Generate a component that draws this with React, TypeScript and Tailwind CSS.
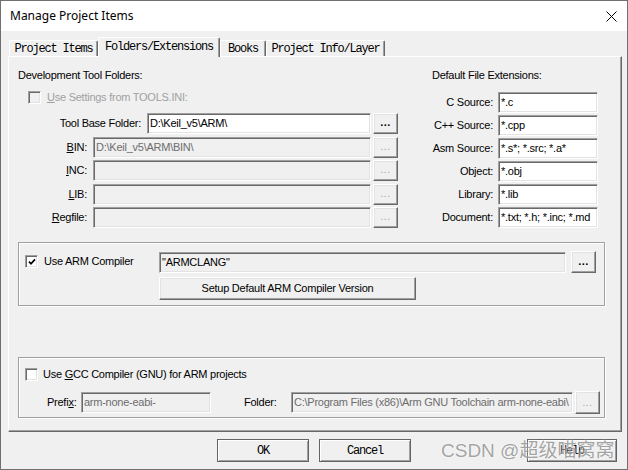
import React from 'react';

const sunken =
  "border border-t-[#a0a0a0] border-l-[#a0a0a0] border-b-white border-r-white shadow-[inset_1px_1px_0_#696969,inset_-1px_-1px_0_#e3e3e3]";
const raised =
  "border border-t-white border-l-white border-b-[#696969] border-r-[#696969] shadow-[inset_-1px_-1px_0_#a0a0a0,inset_1px_1px_0_#e3e3e3] bg-[#f0f0f0]";
const etched = "border border-[#a0a0a0] shadow-[1px_1px_0_#ffffff,inset_1px_1px_0_#ffffff]";
const mono = "font-['Liberation_Mono',monospace] text-[12px] tracking-[-1.2px]";

function Field({
  w,
  text,
  disabled,
  gray,
}: {
  w: string;
  text?: string;
  disabled?: boolean;
  gray?: boolean;
}) {
  return (
    <div
      className={`${w} h-[21px] shrink-0 ${sunken} ${
        disabled || gray ? 'bg-[#f0f0f0]' : 'bg-white'
      } ${disabled ? 'text-[#6d6d6d]' : 'text-black'} pl-[2px] flex items-center whitespace-nowrap overflow-hidden leading-none`}
    >
      {text}
    </div>
  );
}

function Dots({ disabled, h }: { disabled?: boolean; h?: string }) {
  return (
    <div
      className={`${raised} w-[25px] ${h ?? 'h-[21px]'} shrink-0 flex items-end justify-center pb-[5px] leading-none tracking-[0.5px] ${
        disabled ? 'text-[#a0a0a0] text-[10px]' : 'text-black text-[11px] font-bold'
      }`}
    >
      ...
    </div>
  );
}

function Check({ checked, disabled }: { checked?: boolean; disabled?: boolean }) {
  return (
    <div
      className={`w-[13px] h-[13px] shrink-0 ${sunken} ${
        disabled ? 'bg-[#f0f0f0]' : 'bg-white'
      } flex items-center justify-center`}
    >
      {checked && (
        <svg width="8" height="8" viewBox="0 0 8 8">
          <path d="M1 3.6 L3 5.8 L7 1.4" fill="none" stroke="#000" strokeWidth="1.7" />
        </svg>
      )}
    </div>
  );
}

function Tab({ label, w, selected }: { label: string; w: string; selected?: boolean }) {
  return (
    <div
      className={`${w} ${
        selected ? 'h-[20px] mb-[-1px] relative z-10 pb-[2px]' : 'h-[16px]'
      } shrink-0 border-t border-l border-r border-t-white border-l-white border-r-[#696969] shadow-[inset_-1px_0_0_#a0a0a0] rounded-t-[2px] bg-[#f0f0f0] flex items-center justify-center ${mono} leading-none whitespace-nowrap text-black`}
    >
      {label}
    </div>
  );
}

function DlgButton({ label, w, ml }: { label: string; w: string; ml?: string }) {
  return (
    <div
      className={`${w} ${ml ?? ''} h-[23px] shrink-0 border border-[#646464] shadow-[inset_1px_1px_0_#ffffff,inset_-1px_-1px_0_#a0a0a0] bg-[#f0f0f0] flex items-center justify-center ${mono} leading-none text-black`}
    >
      {label}
    </div>
  );
}

const leftRows: {
  label: React.ReactNode;
  w: string;
  text?: string;
  disabled?: boolean;
}[] = [
  { label: 'Tool Base Folder:', w: 'w-[224px]', text: 'D:\\Keil_v5\\ARM\\' },
  {
    label: (
      <>
        <u>B</u>IN:
      </>
    ),
    w: 'w-[278px]',
    text: 'D:\\Keil_v5\\ARM\\BIN\\',
    disabled: true,
  },
  {
    label: (
      <>
        <u>I</u>NC:
      </>
    ),
    w: 'w-[278px]',
    disabled: true,
  },
  {
    label: (
      <>
        <u>L</u>IB:
      </>
    ),
    w: 'w-[278px]',
    disabled: true,
  },
  {
    label: (
      <>
        <u>R</u>egfile:
      </>
    ),
    w: 'w-[278px]',
    disabled: true,
  },
];

const rightRows = [
  { label: 'C Source:', text: '*.c' },
  { label: 'C++ Source:', text: '*.cpp' },
  { label: 'Asm Source:', text: '*.s*; *.src; *.a*' },
  { label: 'Object:', text: '*.obj' },
  { label: 'Library:', text: '*.lib' },
  { label: 'Document:', text: '*.txt; *.h; *.inc; *.md' },
];

export default function App() {
  return (
    <div className="relative w-[628px] h-[470px] bg-[#f0f0f0] border border-[#707070] flex flex-col font-['Liberation_Sans',Arial,sans-serif] text-[11px] tracking-[-0.25px] text-black overflow-hidden">
      {/* title bar */}
      <div className="h-[30px] bg-white flex items-center justify-between pl-[9px] pr-[10px] shrink-0">
        <span className="font-['Noto_Sans',sans-serif] text-[12px] tracking-normal leading-none text-black">
          Manage Project Items
        </span>
        <svg width="11" height="11" viewBox="0 0 11 11">
          <path d="M0.5 0.5 L10.5 10.5 M10.5 0.5 L0.5 10.5" stroke="#000" strokeWidth="1" />
        </svg>
      </div>

      {/* tabs */}
      <div className="h-[25px] flex items-end pl-[8px] shrink-0">
        <Tab w="w-[89px]" label="Project Items" />
        <Tab w="w-[122px]" label="Folders/Extensions" selected />
        <Tab w="w-[46px]" label="Books" />
        <Tab w="w-[119px]" label="Project Info/Layer" />
      </div>

      {/* tab panel */}
      <div className="ml-[7px] mr-[5px] h-[376px] shrink-0 border border-t-white border-l-white border-r-[#696969] border-b-[#696969] shadow-[inset_-1px_-1px_0_#a0a0a0] flex flex-col pt-[11px]">
        <div className="flex">
          {/* left column */}
          <div className="w-[389px] shrink-0 flex flex-col">
            <div className="ml-[9px] h-[14px] leading-[14px]">Development Tool Folders:</div>
            <div className="ml-[19px] mt-[9px] h-[13px] flex items-center">
              <Check disabled />
              <span className="ml-[6px] text-[#a0a0a0] leading-none">
                <u>U</u>se Settings from TOOLS.INI:
              </span>
            </div>
            <div className="mt-[9px] flex flex-col gap-[2.5px]">
              {leftRows.map((r, i) => (
                <div key={i} className="h-[21px] flex items-center justify-end">
                  <span className="mr-[6px] whitespace-nowrap leading-none">{r.label}</span>
                  <Field w={r.w} text={r.text} disabled={r.disabled} />
                  <div className="ml-[2px]">
                    <Dots disabled={r.disabled} />
                  </div>
                </div>
              ))}
            </div>
          </div>

          {/* right column */}
          <div className="flex-1 flex flex-col">
            <div className="ml-[34px] h-[14px] leading-[14px]">Default File Extensions:</div>
            <div className="mt-[10px] flex flex-col gap-[2px]">
              {rightRows.map((r) => (
                <div key={r.label} className="h-[21px] flex items-center">
                  <span className="w-[95px] text-right whitespace-nowrap leading-none">{r.label}</span>
                  <div className="ml-[5px]">
                    <Field w="w-[100px]" text={r.text} />
                  </div>
                </div>
              ))}
            </div>
          </div>
        </div>

        {/* ARM compiler group */}
        <div className={`ml-[9px] mt-[14px] w-[587px] h-[64px] ${etched} flex pt-[8px]`}>
          <div className="w-[140px] shrink-0 pl-[6px] h-[21px] flex items-center">
            <Check checked />
            <span className="ml-[6px] leading-none whitespace-nowrap">Use ARM Compiler</span>
          </div>
          <div className="flex flex-col">
            <div className="flex items-center">
              <Field w="w-[407px]" text={'"ARMCLANG"'} gray />
              <div className="ml-[5px]">
                <Dots h="h-[22px]" />
              </div>
            </div>
            <div
              className={`mt-[4px] w-[257px] h-[23px] ${raised} flex items-center justify-center leading-none`}
            >
              Setup Default ARM Compiler Version
            </div>
          </div>
        </div>

        {/* GCC group */}
        <div className={`ml-[9px] mt-[51px] w-[587px] h-[61px] ${etched} flex flex-col pt-[10px]`}>
          <div className="h-[13px] pl-[6px] flex items-center">
            <Check />
            <span className="ml-[5px] leading-none whitespace-nowrap">
              Use <u>G</u>CC Compiler (GNU) for ARM projects
            </span>
          </div>
          <div className="mt-[10px] h-[23px] flex items-center">
            <span className="ml-[28px] w-[26px] whitespace-nowrap leading-none">
              Prefi<u>x</u>:
            </span>
            <div className="ml-[8px]">
              <Field w="w-[130px]" text="arm-none-eabi-" disabled />
            </div>
            <span className="ml-[33px] w-[31px] whitespace-nowrap leading-none">Folder:</span>
            <div className="ml-[16px]">
              <Field
                w="w-[282px]"
                text={'C:\\Program Files (x86)\\Arm GNU Toolchain arm-none-eabi\\'}
                disabled
              />
            </div>
            <div className="ml-[2px]">
              <Dots disabled h="h-[23px]" />
            </div>
          </div>
        </div>
      </div>

      {/* dialog buttons */}
      <div className="mt-[7px] flex pl-[216px] shrink-0">
        <DlgButton label="OK" w="w-[92px]" />
        <DlgButton label="Cancel" w="w-[92px]" ml="ml-[10px]" />
        <DlgButton label="Help" w="w-[90px]" ml="ml-[116px]" />
      </div>

      {/* watermark */}
      <div className="absolute left-[440px] top-[440px] text-[19px] leading-none tracking-normal whitespace-nowrap text-[rgba(105,105,105,0.6)] [text-shadow:0_0_2px_#ffffff] font-['Liberation_Sans','Noto_Sans_CJK_SC',sans-serif]">
        CSDN @超级喵窝窝
      </div>
    </div>
  );
}
